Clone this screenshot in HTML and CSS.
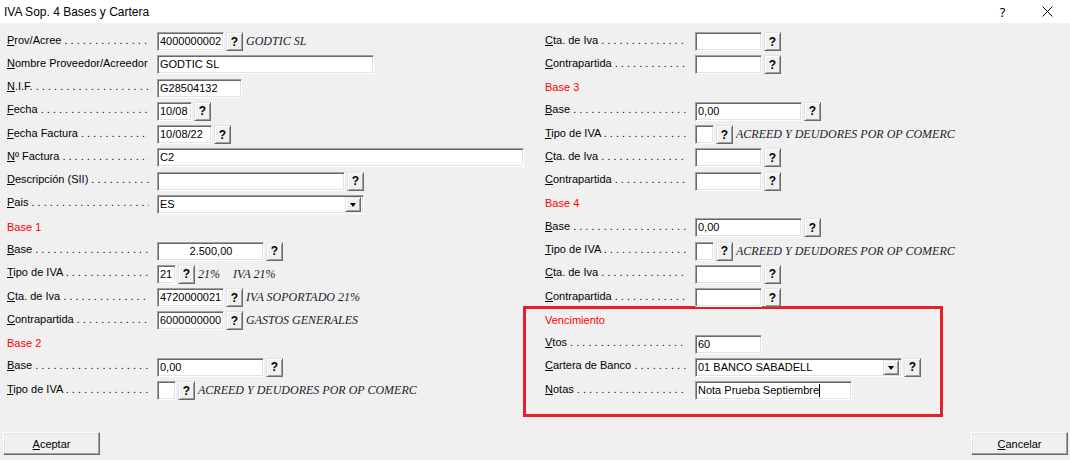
FILE: index.html
```html
<!DOCTYPE html>
<html lang="es">
	<head>
		<meta charset="utf-8">
		<title>IVA Sop. 4 Bases y Cartera</title>
		<link rel="stylesheet" href="styles.css">
	</head>
	<body>
		<div class="titlebar">
			<span class="title">IVA Sop. 4 Bases y Cartera</span>
			<span class="tb-btn tb-help">?</span>
			<span class="tb-btn tb-close">
				<svg width="11" height="11" viewBox="0 0 11 11"><path d="M0.5 0.5 L10.5 10.5 M10.5 0.5 L0.5 10.5" stroke="#000" stroke-width="1"/></svg>
			</span>
		</div>

		<div class="form">
			<!-- columna izquierda -->
			<div class="col">
				<div class="row">
					<span class="lbl"><u>P</u>rov/Acree</span>
					<span class="fld w-acct">4000000002</span><span class="q">?</span>
					<span class="desc">GODTIC SL</span>
				</div>
				<div class="row">
					<span class="lbl"><u>N</u>ombre Proveedor/Acreedor</span>
					<span class="fld w-name">GODTIC SL</span>
				</div>
				<div class="row">
					<span class="lbl"><u>N</u>.I.F.</span>
					<span class="fld w-nif">G28504132</span>
				</div>
				<div class="row">
					<span class="lbl"><u>F</u>echa</span>
					<span class="fld w-day">10/08</span><span class="q">?</span>
				</div>
				<div class="row">
					<span class="lbl"><u>F</u>echa Factura</span>
					<span class="fld w-date">10/08/22</span><span class="q">?</span>
				</div>
				<div class="row">
					<span class="lbl"><u>N</u>º Factura</span>
					<span class="fld w-fact">C2</span>
				</div>
				<div class="row">
					<span class="lbl"><u>D</u>escripción (SII)</span>
					<span class="fld w-sii"></span><span class="q">?</span>
				</div>
				<div class="row">
					<span class="lbl"><u>P</u>ais</span>
					<span class="fld sel w-sel"><span class="sel-txt">ES</span><span class="drop"></span></span>
				</div>
				<div class="row sec">Base 1</div>
				<div class="row">
					<span class="lbl"><u>B</u>ase</span>
					<span class="fld w-base center">2.500,00</span><span class="q">?</span>
				</div>
				<div class="row">
					<span class="lbl"><u>T</u>ipo de IVA</span>
					<span class="fld w-tipo">21</span><span class="q">?</span>
					<span class="desc">21%</span><span class="desc desc-gap">IVA 21%</span>
				</div>
				<div class="row">
					<span class="lbl"><u>C</u>ta. de Iva</span>
					<span class="fld w-acct">4720000021</span><span class="q">?</span>
					<span class="desc">IVA SOPORTADO 21%</span>
				</div>
				<div class="row">
					<span class="lbl"><u>C</u>ontrapartida</span>
					<span class="fld w-acct">6000000000</span><span class="q">?</span>
					<span class="desc">GASTOS GENERALES</span>
				</div>
				<div class="row sec">Base 2</div>
				<div class="row">
					<span class="lbl"><u>B</u>ase</span>
					<span class="fld w-base">0,00</span><span class="q">?</span>
				</div>
				<div class="row">
					<span class="lbl"><u>T</u>ipo de IVA</span>
					<span class="fld w-tipo"></span><span class="q">?</span>
					<span class="desc">ACREED Y DEUDORES POR OP COMERC</span>
				</div>
			</div>

			<!-- columna derecha -->
			<div class="col">
				<div class="row">
					<span class="lbl"><u>C</u>ta. de Iva</span>
					<span class="fld w-acct"></span><span class="q">?</span>
				</div>
				<div class="row">
					<span class="lbl"><u>C</u>ontrapartida</span>
					<span class="fld w-acct"></span><span class="q">?</span>
				</div>
				<div class="row sec">Base 3</div>
				<div class="row">
					<span class="lbl"><u>B</u>ase</span>
					<span class="fld w-base">0,00</span><span class="q">?</span>
				</div>
				<div class="row">
					<span class="lbl"><u>T</u>ipo de IVA</span>
					<span class="fld w-tipo"></span><span class="q">?</span>
					<span class="desc">ACREED Y DEUDORES POR OP COMERC</span>
				</div>
				<div class="row">
					<span class="lbl"><u>C</u>ta. de Iva</span>
					<span class="fld w-acct"></span><span class="q">?</span>
				</div>
				<div class="row">
					<span class="lbl"><u>C</u>ontrapartida</span>
					<span class="fld w-acct"></span><span class="q">?</span>
				</div>
				<div class="row sec">Base 4</div>
				<div class="row">
					<span class="lbl"><u>B</u>ase</span>
					<span class="fld w-base">0,00</span><span class="q">?</span>
				</div>
				<div class="row">
					<span class="lbl"><u>T</u>ipo de IVA</span>
					<span class="fld w-tipo"></span><span class="q">?</span>
					<span class="desc">ACREED Y DEUDORES POR OP COMERC</span>
				</div>
				<div class="row">
					<span class="lbl"><u>C</u>ta. de Iva</span>
					<span class="fld w-acct"></span><span class="q">?</span>
				</div>
				<div class="row">
					<span class="lbl"><u>C</u>ontrapartida</span>
					<span class="fld w-acct"></span><span class="q">?</span>
				</div>

				<div class="venc">
					<div class="row sec">Vencimiento</div>
					<div class="row">
						<span class="lbl"><u>V</u>tos</span>
						<span class="fld w-acct">60</span>
					</div>
					<div class="row">
						<span class="lbl"><u>C</u>artera de Banco</span>
						<span class="fld sel w-sel"><span class="sel-txt">01 BANCO SABADELL</span><span class="drop"></span></span><span class="q">?</span>
					</div>
					<div class="row">
						<span class="lbl"><u>N</u>otas</span>
						<span class="fld w-notas">Nota Prueba Septiembre<span class="caret"></span></span>
					</div>
				</div>
			</div>
		</div>

		<div class="footer">
			<span class="btn"><u>A</u>ceptar</span>
			<span class="btn"><u>C</u>ancelar</span>
		</div>
	</body>
</html>
```

FILE: styles.css
```css
body {
	margin: 0;
	background: #f0f0f0;
	font: 11px "Liberation Sans", Arial, sans-serif;
	color: #000;
}

.titlebar {
	height: 23px;
	background: #fff;
	display: flex;
	align-items: center;
	padding-left: 4px;
}

.title {
	font: 12px "Liberation Sans", Arial, sans-serif;
}

.tb-btn {
	width: 46px;
	height: 23px;
	display: flex;
	align-items: center;
	justify-content: center;
	font: 13px "Noto Sans", sans-serif;
}

.tb-help {
	margin-left: auto;
	padding-left: 3px;
	box-sizing: border-box;
}

.form {
	display: grid;
	grid-template-columns: 538px 1fr;
	padding: 7px 0 0 7px;
}

.row {
	height: 23.27px;
	display: flex;
	align-items: center;
}

.lbl {
	width: 142px;
	margin-right: 8px;
	overflow: hidden;
	white-space: nowrap;
	position: relative;
	top: -2px;
}

.lbl::after {
	content: " . . . . . . . . . . . . . . . . . . . . . . . . . . . . . . . . . . . .";
}

.sec {
	color: #ff0000;
	padding-bottom: 2px;
	box-sizing: border-box;
}

.fld {
	height: 19px;
	box-sizing: border-box;
	background: #fff;
	border: 1px solid;
	border-color: #a0a0a0 #fff #fff #a0a0a0;
	box-shadow: inset 1px 1px #696969, inset -1px -1px #e3e3e3;
	padding: 0 1px 0 2px;
	line-height: 17px;
	white-space: nowrap;
	overflow: hidden;
	flex: none;
}

.center {
	text-align: center;
}

.w-acct { width: 67px; }
.w-name { width: 217px; }
.w-nif { width: 85px; }
.w-day { width: 35px; }
.w-date { width: 55px; }
.w-fact { width: 367px; }
.w-sii { width: 188px; }
.w-sel { width: 207px; }
.w-base { width: 107px; }
.w-tipo { width: 19px; }
.w-notas { width: 157px; }

.sel {
	display: flex;
	padding-right: 2px;
}

.sel-txt {
	flex: 1;
}

.drop {
	width: 16px;
	height: 15px;
	margin-top: 1px;
	box-sizing: border-box;
	background: #f0f0f0;
	border: 1px solid;
	border-color: #e3e3e3 #696969 #696969 #e3e3e3;
	box-shadow: inset 1px 1px #fff, inset -1px -1px #a0a0a0;
	position: relative;
}

.drop::after {
	content: "";
	position: absolute;
	left: 4px;
	top: 5px;
	border-left: 3.5px solid transparent;
	border-right: 3.5px solid transparent;
	border-top: 4px solid #000;
}

.q {
	width: 17px;
	height: 19px;
	margin-left: 2px;
	box-sizing: border-box;
	background: #f0f0f0;
	border: 1px solid;
	border-color: #e3e3e3 #696969 #696969 #e3e3e3;
	box-shadow: inset 1px 1px #fff, inset -1px -1px #a0a0a0;
	display: flex;
	align-items: center;
	justify-content: center;
	font: bold 12px "Liberation Sans", Arial, sans-serif;
	flex: none;
}

.desc {
	margin-left: 3px;
	font: italic 12px "Liberation Serif", "Times New Roman", serif;
	color: #1c1c2e;
	white-space: nowrap;
}

.desc-gap {
	margin-left: 13px;
}

.caret {
	display: inline-block;
	width: 1px;
	height: 13px;
	background: #000;
	vertical-align: -3px;
}

.venc {
	width: 420px;
	box-sizing: border-box;
	margin: -3px 0 0 -22px;
	padding: 0 0 12px 19px;
	border: 3px solid #e81d25;
}

.footer {
	display: flex;
	justify-content: space-between;
	padding: 0 2px 0 3px;
	margin-top: 15px;
}

.btn {
	width: 97px;
	height: 23px;
	box-sizing: border-box;
	background: #f0f0f0;
	border: 1px solid;
	border-color: #fff #696969 #696969 #fff;
	box-shadow: inset -1px -1px #a0a0a0, inset 1px 1px #e3e3e3;
	display: flex;
	align-items: center;
	justify-content: center;
}
```
